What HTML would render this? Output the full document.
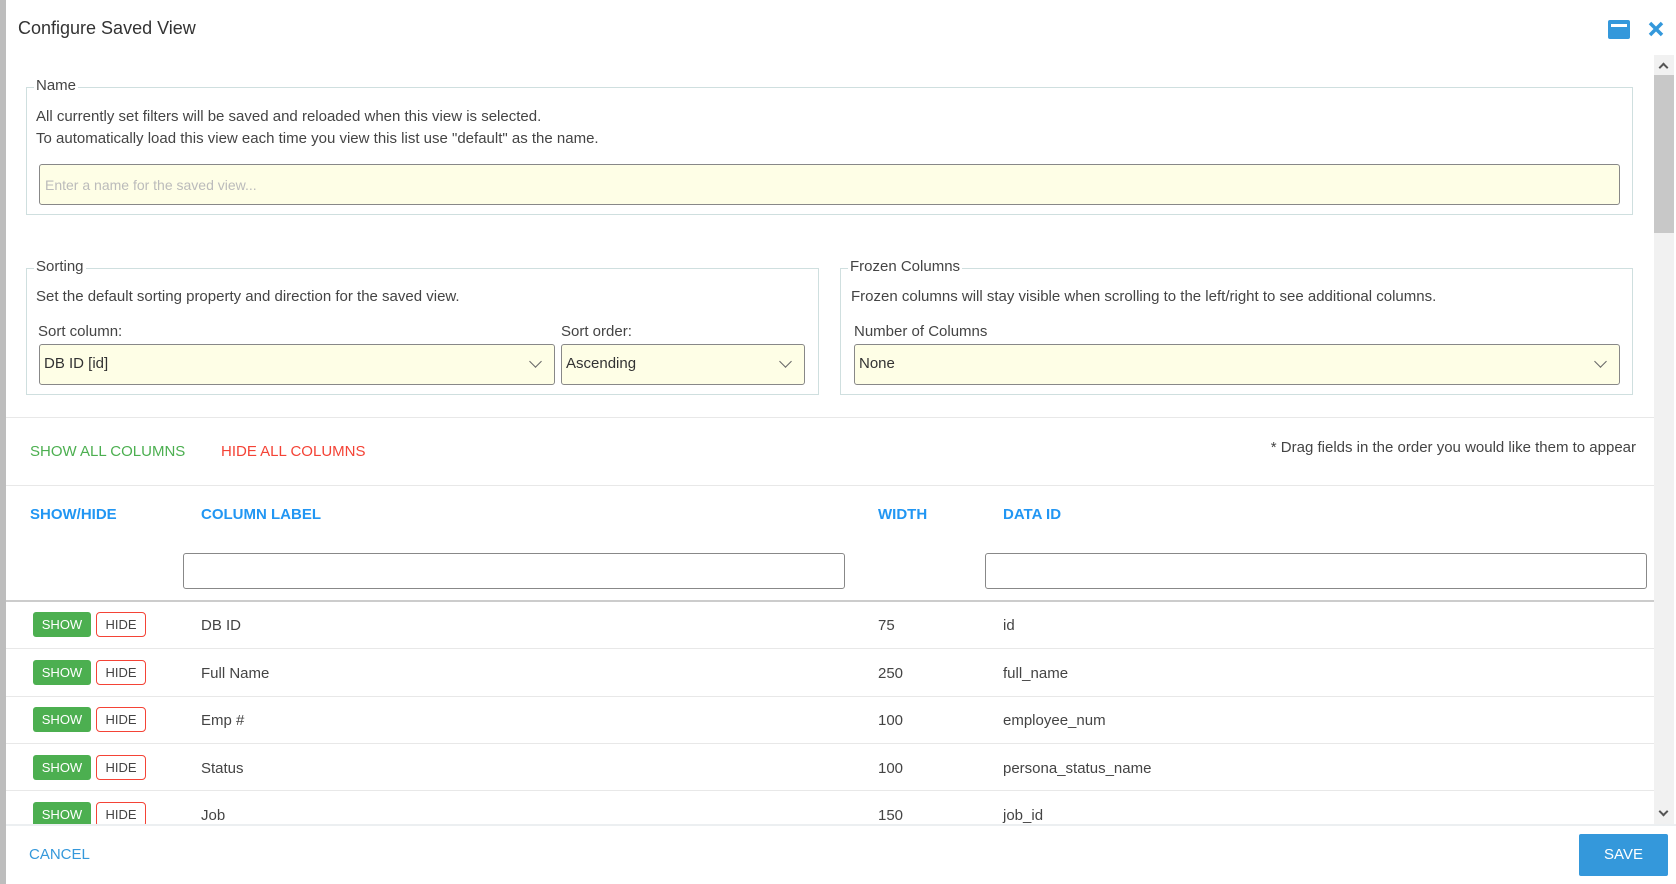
<!DOCTYPE html>
<html><head><meta charset="utf-8"><style>
*{box-sizing:border-box;margin:0;padding:0}
body{width:1676px;height:884px;overflow:hidden;background:#fff;font-family:"Liberation Sans",sans-serif;color:#444;font-size:15px;position:relative}
.a{position:absolute}
.strip{left:0;top:0;width:6px;height:884px;background:#bdbdbd}
.box{border:1px solid #cfdfdf}
.leg{background:#fff;padding:0 2px;font-size:15px;color:#444}
.inp{background:#fefee6;border:1px solid #888;border-radius:3px}
.sel{font-size:15px;color:#333;padding:10px 4px}
.chev{position:absolute;right:14px;top:12px;width:9px;height:9px;border-right:1.5px solid #666;border-bottom:1.5px solid #666;transform:rotate(45deg)}
.hline{height:1px;background:#e8e8e8;left:6px;width:1648px}
.hd{color:#2196f3;font-weight:bold;font-size:15px}
.f{border:1px solid #888;border-radius:3px;height:36px;background:#fff}
.show{background:#4caf50;color:#fff;border-radius:3px;width:58px;height:25px;font-size:13px;text-align:center;line-height:25px}
.hide{border:1px solid #f44336;color:#444;border-radius:4px;width:50px;height:25px;font-size:13px;text-align:center;line-height:23px;background:#fff}
.cell{font-size:15px;color:#444}
</style></head><body>
<div class="a strip"></div>
<div class="a" style="left:18px;top:18px;font-size:18px;color:#333">Configure Saved View</div>
<div class="a" style="left:1608px;top:20px;width:22px;height:19px;background:#3498db;border-radius:2px"><div style="margin:4px 3px;height:3px;background:#fff"></div></div>
<svg class="a" style="left:1648px;top:21px" width="16" height="16"><path d="M2 2L14 14M14 2L2 14" stroke="#3498db" stroke-width="3.5"/></svg>
<!-- scrollbar -->
<div class="a" style="left:1654px;top:55px;width:20px;height:770px;background:#f1f1f1"></div>
<div class="a" style="left:1654px;top:75px;width:20px;height:158px;background:#c8c8c8"></div>
<div class="a" style="left:1660px;top:64px;width:7px;height:7px;border-left:2px solid #555;border-top:2px solid #555;transform:rotate(45deg)"></div>
<div class="a" style="left:1660px;top:808px;width:7px;height:7px;border-right:2px solid #555;border-bottom:2px solid #555;transform:rotate(45deg)"></div>

<div class="a box" style="left:26px;top:87px;width:1607px;height:128px"></div>
<div class="a leg" style="left:34px;top:77px">Name</div>
<div class="a" style="left:36px;top:106px;line-height:22px">All currently set filters will be saved and reloaded when this view is selected.<br>To automatically load this view each time you view this list use "default" as the name.</div>
<div class="a inp" style="left:39px;top:164px;width:1581px;height:41px;color:#bbb;padding:12px 5px;font-size:14px">Enter a name for the saved view...</div>

<div class="a box" style="left:26px;top:268px;width:793px;height:127px"></div>
<div class="a leg" style="left:34px;top:258px">Sorting</div>
<div class="a" style="left:36px;top:288px">Set the default sorting property and direction for the saved view.</div>
<div class="a" style="left:38px;top:323px">Sort column:</div>
<div class="a" style="left:561px;top:323px">Sort order:</div>
<div class="a inp sel" style="left:39px;top:344px;width:516px;height:41px">DB ID [id]<span class="chev"></span></div>
<div class="a inp sel" style="left:561px;top:344px;width:244px;height:41px">Ascending<span class="chev"></span></div>

<div class="a box" style="left:840px;top:268px;width:793px;height:127px"></div>
<div class="a leg" style="left:848px;top:258px">Frozen Columns</div>
<div class="a" style="left:851px;top:288px">Frozen columns will stay visible when scrolling to the left/right to see additional columns.</div>
<div class="a" style="left:854px;top:323px">Number of Columns</div>
<div class="a inp sel" style="left:854px;top:344px;width:766px;height:41px">None<span class="chev"></span></div>

<div class="a hline" style="top:417px"></div>
<div class="a" style="left:30px;top:443px;color:#4caf50">SHOW ALL COLUMNS</div>
<div class="a" style="left:221px;top:443px;color:#f44336">HIDE ALL COLUMNS</div>
<div class="a" style="right:40px;top:439px;color:#444">* Drag fields in the order you would like them to appear</div>
<div class="a hline" style="top:485px"></div>

<div class="a hd" style="left:30px;top:506px">SHOW/HIDE</div>
<div class="a hd" style="left:201px;top:506px">COLUMN LABEL</div>
<div class="a hd" style="left:878px;top:506px">WIDTH</div>
<div class="a hd" style="left:1003px;top:506px">DATA ID</div>
<div class="a f" style="left:183px;top:553px;width:662px"></div>
<div class="a f" style="left:985px;top:553px;width:662px"></div>
<div class="a" style="left:6px;top:600px;width:1648px;height:2px;background:#ccc"></div>

<div class="a" style="left:6px;top:602px;width:1648px;height:222px;overflow:hidden">
<div style="position:relative">
<div class="a show" style="left:27px;top:10px">SHOW</div><div class="a hide" style="left:90px;top:10px">HIDE</div>
<div class="a cell" style="left:195px;top:15px">DB ID</div><div class="a cell" style="left:872px;top:15px">75</div><div class="a cell" style="left:997px;top:15px">id</div>
<div class="a" style="left:0;top:46px;width:1648px;height:1px;background:#e8e8e8"></div>
<div class="a show" style="left:27px;top:58px">SHOW</div><div class="a hide" style="left:90px;top:58px">HIDE</div>
<div class="a cell" style="left:195px;top:63px">Full Name</div><div class="a cell" style="left:872px;top:63px">250</div><div class="a cell" style="left:997px;top:63px">full_name</div>
<div class="a" style="left:0;top:94px;width:1648px;height:1px;background:#e8e8e8"></div>
<div class="a show" style="left:27px;top:105px">SHOW</div><div class="a hide" style="left:90px;top:105px">HIDE</div>
<div class="a cell" style="left:195px;top:110px">Emp #</div><div class="a cell" style="left:872px;top:110px">100</div><div class="a cell" style="left:997px;top:110px">employee_num</div>
<div class="a" style="left:0;top:141px;width:1648px;height:1px;background:#e8e8e8"></div>
<div class="a show" style="left:27px;top:153px">SHOW</div><div class="a hide" style="left:90px;top:153px">HIDE</div>
<div class="a cell" style="left:195px;top:158px">Status</div><div class="a cell" style="left:872px;top:158px">100</div><div class="a cell" style="left:997px;top:158px">persona_status_name</div>
<div class="a" style="left:0;top:188px;width:1648px;height:1px;background:#e8e8e8"></div>
<div class="a show" style="left:27px;top:200px">SHOW</div><div class="a hide" style="left:90px;top:200px">HIDE</div>
<div class="a cell" style="left:195px;top:205px">Job</div><div class="a cell" style="left:872px;top:205px">150</div><div class="a cell" style="left:997px;top:205px">job_id</div>
</div></div>

<div class="a" style="left:6px;top:824px;width:1670px;height:2px;background:#eceff1"></div>
<div class="a" style="left:29px;top:846px;color:#3498db">CANCEL</div>
<div class="a" style="left:1579px;top:834px;width:89px;height:42px;background:#3498db;color:#fff;text-align:center;line-height:42px;font-size:15px;border-radius:2px">SAVE</div>
</body></html>
